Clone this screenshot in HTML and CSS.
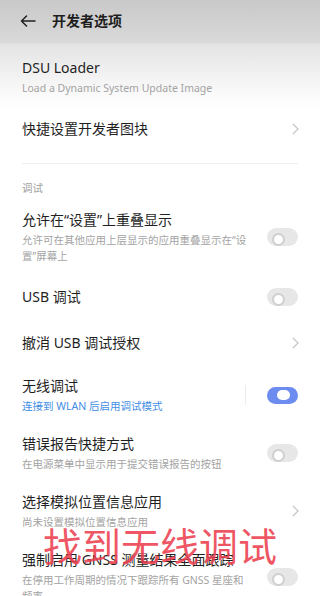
FILE: index.html
```html
<!DOCTYPE html>
<html lang="zh-CN">
<head>
<meta charset="utf-8">
<link rel="stylesheet" href="styles.css">
</head>
<body>
<div class="page">
  <header class="header">
    <svg class="back" width="16" height="12" viewBox="0 0 16 12"><path d="M15 6H1.5M6.5 1L1.5 6L6.5 11" fill="none" stroke="#222" stroke-width="1.5" stroke-linecap="round" stroke-linejoin="round"/></svg>
    <h1 class="title">开发者选项</h1>
  </header>
  <main class="list">
    <div class="row">
      <div class="text">
        <div class="label">DSU Loader</div>
        <div class="sub">Load a Dynamic System Update Image</div>
      </div>
    </div>
    <div class="row single">
      <div class="text"><div class="label">快捷设置开发者图块</div></div>
      <svg class="chev" width="7" height="12" viewBox="0 0 7 12"><path d="M1 1L6 6L1 11" fill="none" stroke="#c4c4c4" stroke-width="1.2"/></svg>
    </div>
    <div class="divider"></div>
    <div class="section">调试</div>
    <div class="row">
      <div class="text">
        <div class="label">允许在“设置”上重叠显示</div>
        <div class="sub">允许可在其他应用上层显示的应用重叠显示在“设置”屏幕上</div>
      </div>
      <span class="switch"></span>
    </div>
    <div class="row single">
      <div class="text"><div class="label">USB 调试</div></div>
      <span class="switch"></span>
    </div>
    <div class="row single">
      <div class="text"><div class="label">撤消 USB 调试授权</div></div>
      <svg class="chev" width="7" height="12" viewBox="0 0 7 12"><path d="M1 1L6 6L1 11" fill="none" stroke="#c4c4c4" stroke-width="1.2"/></svg>
    </div>
    <div class="row">
      <div class="text">
        <div class="label">无线调试</div>
        <div class="sub blue">连接到 WLAN 后启用调试模式</div>
      </div>
      <span class="vline"></span>
      <span class="switch on"></span>
    </div>
    <div class="row">
      <div class="text">
        <div class="label">错误报告快捷方式</div>
        <div class="sub">在电源菜单中显示用于提交错误报告的按钮</div>
      </div>
      <span class="switch"></span>
    </div>
    <div class="row">
      <div class="text">
        <div class="label">选择模拟位置信息应用</div>
        <div class="sub">尚未设置模拟位置信息应用</div>
      </div>
      <svg class="chev" width="7" height="12" viewBox="0 0 7 12"><path d="M1 1L6 6L1 11" fill="none" stroke="#c4c4c4" stroke-width="1.2"/></svg>
    </div>
    <div class="row">
      <div class="text">
        <div class="label">强制启用 GNSS 测量结果全面跟踪</div>
        <div class="sub">在停用工作周期的情况下跟踪所有 GNSS 星座和频率</div>
      </div>
      <span class="switch"></span>
    </div>
  </main>
  <div class="overlay">找到无线调试</div>
</div>
</body>
</html>
```
FILE: styles.css
```css
* { box-sizing: border-box; }
html, body { margin: 0; padding: 0; }
body {
  width: 320px;
  height: 596px;
  overflow: hidden;
  font-family: "Noto Sans", "Noto Sans CJK SC", sans-serif;
  color: #222;
  background: linear-gradient(#c9c9c9 0, #d9d9d9 43px, #e3e3e3 44px, #f2f2f2 75px, #fcfcfc 100px, #fff 110px);
}
.page { position: relative; height: 596px; }
.header {
  height: 42px;
  display: flex;
  align-items: center;
  padding-left: 20px;
  gap: 16px;
}
.back { flex: none; }
.title {
  margin: 0;
  font-size: 14px;
  font-weight: 700;
  line-height: 20px;
  color: #1e1e1e;
}
.list { padding-top: 6px; }
.row {
  display: flex;
  align-items: center;
  padding: 10px 22px;
}
.row.single { padding-top: 13px; padding-bottom: 13px; }
.text { flex: 1; min-width: 0; margin-right: 15px; }
.label { font-size: 14px; line-height: 20px; color: #1f1f1f; }
.sub { font-size: 10.5px; line-height: 16px; color: #a3a3a3; margin-top: 2px; }
.sub.blue { color: #3f8ee6; }
.chev { flex: none; margin-right: -1px; }
.divider { height: 1px; background: #efefef; margin: 11px 22px 12px; }
.section { height: 24px; padding: 4.5px 22px; font-size: 10.5px; line-height: 15px; color: #a0a0a0; }
.switch {
  flex: none;
  position: relative;
  width: 31px;
  height: 18px;
  border-radius: 9px;
  background: #e7e7e7;
}
.switch::after {
  content: "";
  position: absolute;
  left: 5px;
  top: 4.5px;
  width: 9px;
  height: 9px;
  border-radius: 50%;
  border: 2px solid #cfcfcf;
  background: #fff;
}
.switch.on { background: #6d8cf0; height: 17px; }
.switch.on::after {
  left: 10px;
  top: 3.5px;
  width: 13px;
  height: 10px;
  border: none;
  border-radius: 5px;
}
.vline { flex: none; width: 1px; height: 20px; background: #ececec; margin-right: 21px; margin-left: -15px; }
.overlay {
  position: absolute;
  left: 43px;
  top: 524px;
  font-size: 39px;
  line-height: 44px;
  color: rgba(236, 62, 78, 0.88);
  white-space: nowrap;
}
```
